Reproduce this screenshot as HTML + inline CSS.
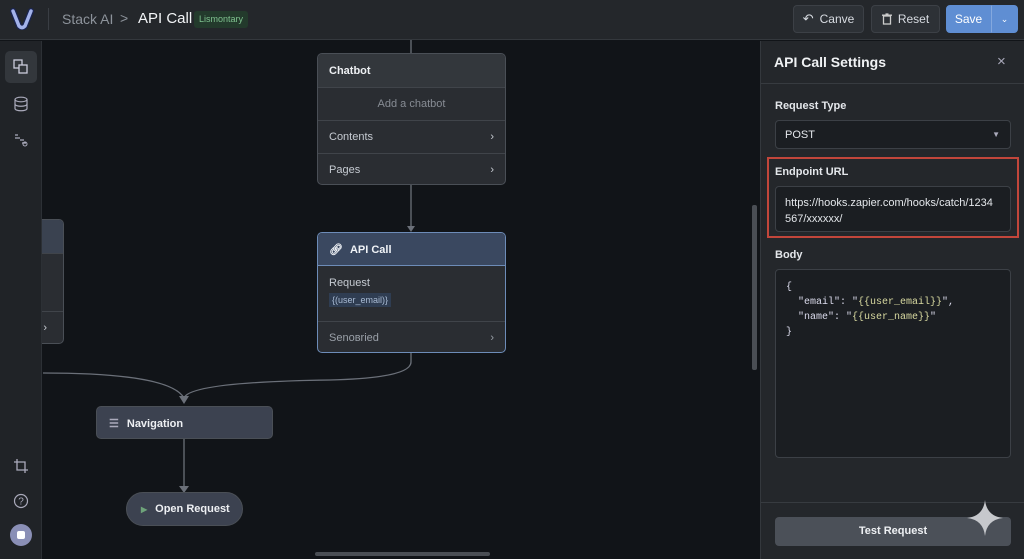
<!DOCTYPE html>
<html><head><meta charset="utf-8"><style>
*{box-sizing:border-box;margin:0;padding:0}
body{width:1024px;height:559px;overflow:hidden;background:#111418;font-family:"Liberation Sans",sans-serif;position:relative;color:#d8dce2}
.abs{position:absolute}
#top{left:0;top:0;width:1024px;height:40px;background:#24272b;border-bottom:1px solid #34383d;z-index:5}
#side{left:0;top:41px;width:42px;height:518px;background:#202327;border-right:1px solid #2c3035;z-index:5}
#panel{left:760px;top:41px;width:264px;height:518px;background:#24272b;border-left:1px solid #34383d;z-index:5}
.btn{position:absolute;top:5px;height:28px;border-radius:4px;background:#2d3136;border:1px solid #3c4046;color:#d8dce2;font-size:12px;display:flex;align-items:center;justify-content:center;gap:6px}
.node{position:absolute;background:#2a2d32;border:1px solid #4a4f56;border-radius:5px;overflow:hidden;font-size:11px;color:#c6cbd2;white-space:nowrap}
.row{border-top:1px solid #40444a;display:flex;align-items:center;padding:0 11px;justify-content:space-between}
.lbl{position:absolute;left:14px;font-size:11px;font-weight:bold;color:#e4e7eb}
.field{position:absolute;left:14px;width:236px;background:#1b1e22;border:1px solid #3c4046;border-radius:4px;font-size:11px;color:#e4e7eb}
</style></head><body>
<div id="top" class="abs">
 <svg class="abs" style="left:10px;top:8px" width="24" height="22" viewBox="0 0 24 22"><path d="M3 3 L9 18 Q12 21 15 18 L21 3" fill="none" stroke="#1a2450" stroke-width="6" stroke-linecap="round" stroke-linejoin="round"/><path d="M3 3 L9 18 Q12 21 15 18 L21 3" fill="none" stroke="#a3b2ea" stroke-width="3.5" stroke-linecap="round" stroke-linejoin="round"/></svg>
 <div class="abs" style="left:48px;top:8px;width:1px;height:22px;background:#3a3e44"></div>
 <div class="abs" style="left:62px;top:11px;font-size:14px;color:#8d939b">Stack AI</div>
 <div class="abs" style="left:120px;top:10px;font-size:14px;color:#8d939b">&gt;</div>
 <div class="abs" style="left:138px;top:10px;font-size:15px;color:#f2f4f6">API Call</div>
 <div class="abs" style="left:194px;top:11px;height:17px;padding:0 5px;background:#233a2c;color:#7fc28f;font-size:9px;line-height:17px;border-radius:3px">Lismontary</div>
 <div class="btn" style="left:793px;width:71px"><span style="font-size:13px">↶</span>Canve</div>
 <div class="btn" style="left:871px;width:69px"><svg width="10" height="12" viewBox="0 0 10 12"><rect x="1.5" y="3" width="7" height="8" fill="none" stroke="#ccc" stroke-width="1.3"/><path d="M0 2.2h10M3.5 1h3" stroke="#ccc" stroke-width="1.3"/></svg>Reset</div>
 <div class="btn" style="left:946px;width:45px;background:#5f8ed3;border-color:#5f8ed3;border-radius:4px 0 0 4px;color:#fff">Save</div>
 <div class="btn" style="left:991px;width:27px;background:#5f8ed3;border-color:#5f8ed3;border-left:1px solid #84a8de;border-radius:0 4px 4px 0;color:#fff;font-size:9px">⌄</div>
</div>
<div id="side" class="abs">
 <div class="abs" style="left:5px;top:10px;width:32px;height:32px;background:#33373c;border-radius:5px"></div>
 <svg class="abs" style="left:13px;top:18px" width="16" height="16"><rect x="1" y="1" width="8" height="8" fill="none" stroke="#ccd" stroke-width="1.3"/><rect x="6" y="6" width="8" height="8" fill="#33373c" stroke="#ccd" stroke-width="1.3"/></svg>
 <svg class="abs" style="left:13px;top:55px" width="16" height="16"><ellipse cx="8" cy="3.5" rx="6" ry="2.3" fill="none" stroke="#aab" stroke-width="1.2"/><path d="M2 3.5v9c0 3 12 3 12 0v-9M2 8c0 3 12 3 12 0" fill="none" stroke="#aab" stroke-width="1.2"/></svg>
 <svg class="abs" style="left:13px;top:91px" width="16" height="16"><path d="M2 3h3M2 6h5M7 8h4M9 11h4" stroke="#aab" stroke-width="1.2"/><circle cx="12" cy="12" r="2" fill="none" stroke="#aab"/></svg>
 <svg class="abs" style="left:13px;top:417px" width="16" height="16"><path d="M4 1v11h11M1 4h11v11" fill="none" stroke="#aab" stroke-width="1.3"/></svg>
 <svg class="abs" style="left:13px;top:452px" width="16" height="16"><circle cx="8" cy="8" r="6.5" fill="none" stroke="#aab" stroke-width="1.2"/><text x="5.2" y="11.5" font-size="10" fill="#aab" font-family="Liberation Sans">?</text></svg>
 <div class="abs" style="left:10px;top:483px;width:22px;height:22px;border-radius:50%;background:#8a8fb6"></div>
 <div class="abs" style="left:17px;top:490px;width:8px;height:8px;border-radius:2px;background:#fff"></div>
</div>
<svg class="abs" style="left:0;top:0" width="760" height="559">
 <g stroke="#6b7079" stroke-width="1.3" fill="none">
  <path d="M411 40V53M411 184V226M411 352V362Q411 378 330 380Q190 382 184 398M43 373Q170 373 184 398M184 438V486"/>
 </g>
 <g fill="#6b7079"><path d="M407 226h8l-4 6z"/><path d="M179 396h10l-5 8z"/><path d="M179 486h10l-5 7z"/></g>
 <rect x="752" y="205" width="5" height="165" rx="2" fill="#4a4e54"/>
 <rect x="315" y="552" width="175" height="4" rx="2" fill="#4a4e54"/>
</svg>
<div class="node" style="left:317px;top:53px;width:189px;height:132px">
 <div style="height:33px;background:#33373c;padding:11px 11px;font-weight:bold;color:#eef0f3">Chatbot</div>
 <div class="row" style="height:33px;justify-content:center;color:#878c94">Add a chatbot</div>
 <div class="row" style="height:33px"><span>Contents</span><span>›</span></div>
 <div class="row" style="height:32px"><span>Pages</span><span>›</span></div>
</div>
<div class="node" style="left:317px;top:232px;width:189px;height:121px;border-color:#6d8cb8">
 <div style="height:33px;background:#3a4860;padding:10px 11px;font-weight:bold;color:#f0f3f7;border-bottom:1px solid #6d8cb8"><span style="margin-right:7px">🔗︎</span>API Call</div>
 <div style="height:55px;padding:11px 11px"><div>Request</div><div style="display:inline-block;margin-top:4px;background:#2f3d52;color:#a9bbd4;font-size:9px;padding:2px 3px">{(user_email)}</div></div>
 <div class="row" style="height:32px;color:#9aa0a8"><span>Senoвried</span><span>›</span></div>
</div>
<div class="node" style="left:20px;top:219px;width:44px;height:125px">
 <div style="height:33px;background:#3a4250"></div>
 <div class="row" style="height:58px"></div>
 <div class="row" style="height:33px;justify-content:flex-end;padding:0 16px 0 0">›</div>
</div>
<div class="node" style="left:96px;top:406px;width:177px;height:33px;background:#3c4250;color:#eef0f3;font-weight:bold;padding:10px 12px"><span style="color:#aab;margin-right:8px">☰</span>Navigation</div>
<div class="node" style="left:126px;top:492px;width:117px;height:34px;border-radius:17px;background:#3c4250;color:#eef0f3;font-weight:bold;padding:10px 0 0 14px"><span style="color:#6ea37a;font-size:8px;margin-right:8px">▶</span>Open Request</div>
<div id="panel" class="abs">
 <div class="abs" style="left:13px;top:13px;font-size:14px;font-weight:bold;color:#f0f2f4">API Call Settings</div>
 <div class="abs" style="left:236px;top:12px;font-size:15px;color:#aab">×</div>
 <div class="abs" style="left:0;top:42px;width:264px;height:1px;background:#373b40"></div>
 <div class="lbl" style="top:59px">Request Type</div>
 <div class="field" style="top:79px;height:29px;padding:8px 9px">POST<span style="position:absolute;right:10px;top:9px;font-size:8px;color:#aab">▼</span></div>
 <div class="abs" style="left:6px;top:116px;width:252px;height:81px;border:2px solid #c2463b"></div>
 <div class="lbl" style="top:125px">Endpoint URL</div>
 <div class="field" style="top:145px;height:46px;padding:8px 9px;line-height:16px">https://hooks.zapier.com/hooks/catch/1234<br>567/xxxxxx/</div>
 <div class="lbl" style="top:208px">Body</div>
 <div class="field" style="top:228px;height:189px;padding:10px 10px;font-family:'Liberation Mono',monospace;font-size:10px;line-height:15px;color:#dde">{<br>&nbsp;&nbsp;"email": "<span style="color:#d8d9a0">{{user_email}}</span>",<br>&nbsp;&nbsp;"name": "<span style="color:#d8d9a0">{{user_name}}</span>"<br>}</div>
 <div class="abs" style="left:0;top:461px;width:264px;height:1px;background:#373b40"></div>
 <div class="abs" style="left:14px;top:476px;width:236px;height:29px;background:#4b5058;border-radius:4px;font-size:11px;font-weight:bold;color:#eef0f3;text-align:center;line-height:29px">Test Request</div>
 <svg class="abs" style="left:206px;top:459px" width="36" height="36" viewBox="0 0 40 40"><path d="M20 0Q22 18 40 20Q22 22 20 40Q18 22 0 20Q18 18 20 0Z" fill="#c6c8cc"/></svg>
</div>
</body></html>
